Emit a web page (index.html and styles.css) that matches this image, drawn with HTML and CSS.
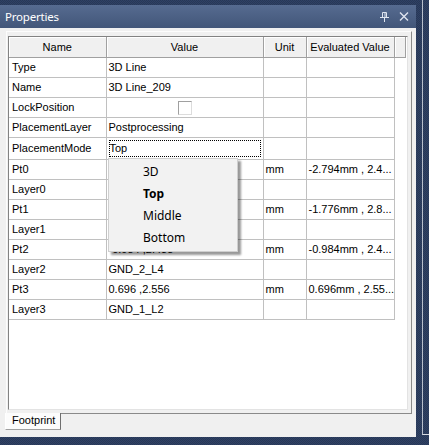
FILE: index.html
```html
<!DOCTYPE html>
<html lang="en">
<head>
    <meta charset="UTF-8">
    <title>Properties</title>
    <link rel="stylesheet" href="styles.css">
</head>
<body>
    <div class="desktop">
        <div class="window">
            <div class="titlebar">
                <span class="title">Properties</span>
                <span class="title-buttons">
                    <svg class="pin" width="9" height="10" viewBox="0 0 9 10">
                        <path d="M2.5 0.5h4v5h-4z M0 5.5h9 M4.5 5.5v4.5" fill="none" stroke="#dfe5ef" stroke-width="1"/>
                        <path d="M5 1v4" stroke="#dfe5ef" stroke-width="1"/>
                    </svg>
                    <svg class="close" width="10" height="9" viewBox="0 0 10 9">
                        <path d="M1 0.5l8 8 M9 0.5l-8 8" stroke="#dfe5ef" stroke-width="1.4"/>
                    </svg>
                </span>
            </div>
            <div class="panel">
                <div class="page">
                    <div class="grid-box">
                        <table class="grid">
                            <thead>
                                <tr>
                                    <th class="c-name">Name</th>
                                    <th class="c-value">Value</th>
                                    <th class="c-unit">Unit</th>
                                    <th class="c-eval">Evaluated Value</th>
                                    <th class="c-end"></th>
                                </tr>
                            </thead>
                            <tbody>
                                <tr><td>Type</td><td>3D Line</td><td></td><td></td></tr>
                                <tr><td>Name</td><td>3D Line_209</td><td></td><td></td></tr>
                                <tr><td>LockPosition</td><td class="center"><span class="checkbox"></span></td><td></td><td></td></tr>
                                <tr><td>PlacementLayer</td><td>Postprocessing</td><td></td><td></td></tr>
                                <tr><td>PlacementMode</td><td class="editing"><span class="focus">Top</span></td><td></td><td></td></tr>
                                <!-- values under the open drop-down are covered, left empty -->
                                <tr><td>Pt0</td><td></td><td>mm</td><td>-2.794mm , 2.4...</td></tr>
                                <tr><td>Layer0</td><td></td><td></td><td></td></tr>
                                <tr><td>Pt1</td><td></td><td>mm</td><td>-1.776mm , 2.8...</td></tr>
                                <tr><td>Layer1</td><td></td><td></td><td></td></tr>
                                <tr><td>Pt2</td><td>-0.984 ,2.438</td><td>mm</td><td>-0.984mm , 2.4...</td></tr>
                                <tr><td>Layer2</td><td>GND_2_L4</td><td></td><td></td></tr>
                                <tr><td>Pt3</td><td>0.696 ,2.556</td><td>mm</td><td>0.696mm , 2.55...</td></tr>
                                <tr><td>Layer3</td><td>GND_1_L2</td><td></td><td></td></tr>
                            </tbody>
                        </table>
                        <ul class="menu">
                            <li>3D</li>
                            <li class="selected">Top</li>
                            <li>Middle</li>
                            <li>Bottom</li>
                        </ul>
                    </div>
                </div>
                <div class="tabs">
                    <div class="tab">Footprint</div>
                </div>
            </div>
        </div>
        <div class="side">
            <div class="edge"></div>
        </div>
    </div>
</body>
</html>
```

FILE: styles.css
```css
body {
    margin: 0;
    width: 429px;
    height: 445px;
    overflow: hidden;
    background-color: #2b3c5d;
    background-image: repeating-conic-gradient(#2f4165 0 25%, #283856 0 50%);
    background-size: 2px 2px;
    font-family: "Liberation Sans", Arial, sans-serif;
    font-size: 11px;
    color: #000;
}
.desktop {
    display: flex;
    height: 445px;
}
.window {
    width: 416px;
    height: 432px;
    margin-top: 5px;
    display: flex;
    flex-direction: column;
}
.titlebar {
    height: 23px;
    flex: none;
    display: flex;
    align-items: center;
    justify-content: space-between;
    padding: 0 7px 0 5px;
    background: linear-gradient(#566b90, #425679);
    color: #fff;
}
.title {
    font-family: "Noto Sans", sans-serif;
    font-size: 11.5px;
    letter-spacing: -0.2px;
}
.title-buttons {
    display: flex;
    align-items: center;
    gap: 10px;
}
.pin {
    display: block;
    margin-top: 1px;
}
.close {
    display: block;
}
.panel {
    flex: 1;
    background: #f0f0f0;
    padding: 3px 0 0 6px;
}
.page {
    width: 400px;
    height: 374px;
    border: 1px solid;
    border-color: #fcfcfc #8a8a8a #8a8a8a #fcfcfc;
    padding: 4px 3px 3px 1px;
}
.grid-box {
    position: relative;
    height: 372px;
    background: #fff;
    border: 1px solid;
    border-color: #828282 #e3e3e3 #e3e3e3 #828282;
    overflow: hidden;
}
.grid {
    border-collapse: collapse;
    table-layout: fixed;
    width: 396px;
}
.grid th {
    height: 20px;
    padding: 0;
    font-weight: normal;
    text-align: center;
    background: #f0f0f0;
    border-right: 1px solid #a0a0a0;
    border-bottom: 1px solid #a0a0a0;
    box-shadow: inset 1px 1px 0 #fff;
    box-sizing: border-box;
}
.c-name { width: 97px; }
.c-value { width: 157px; }
.c-unit { width: 43px; }
.c-eval { width: 88px; }
.c-end { width: 11px; }
.grid td {
    height: 19px;
    padding: 0 0 0 2px;
    border-right: 1px solid #c0c0c0;
    border-bottom: 1px solid #c0c0c0;
    white-space: nowrap;
    overflow: hidden;
}
.grid td:first-child {
    padding-left: 3px;
}
.grid td.center {
    text-align: center;
    padding: 0;
}
.checkbox {
    display: inline-block;
    width: 12px;
    height: 12px;
    margin-top: 2px;
    vertical-align: middle;
    border: 1px solid;
    border-color: #a0a0a0 #dcdcdc #dcdcdc #a0a0a0;
    background: #fff;
}
.grid td.editing {
    padding: 1px 2px;
}
.focus {
    display: block;
    height: 15px;
    line-height: 15px;
    border: 1px dotted #000;
}
.menu {
    position: absolute;
    left: 99px;
    top: 121px;
    width: 128px;
    margin: 0;
    padding: 2px 0;
    list-style: none;
    background: #f2f2f2;
    border: 1px solid #cfcfcf;
    box-shadow: 3px 3px 2px rgba(0, 0, 0, 0.4);
    font-family: "Noto Sans", sans-serif;
    font-size: 12px;
}
.menu li {
    height: 22px;
    line-height: 22px;
    padding-left: 34px;
}
.menu li.selected {
    font-weight: bold;
}
.tabs {
    display: flex;
    margin-top: -1px;
}
.tab {
    width: 48px;
    height: 16px;
    margin-left: -1px;
    padding-left: 6px;
    line-height: 15px;
    background: #fcfcfc;
    border-left: 1px solid #fff;
    border-right: 1px solid #6e6e6e;
    border-bottom: 1px solid #a0a0a0;
}
.side {
    flex: 1;
    padding: 0 0 10px 6px;
}
.edge {
    height: 434px;
    border-left: 1px solid #b8bfcc;
    border-bottom: 1px solid #d8dce4;
}
```
